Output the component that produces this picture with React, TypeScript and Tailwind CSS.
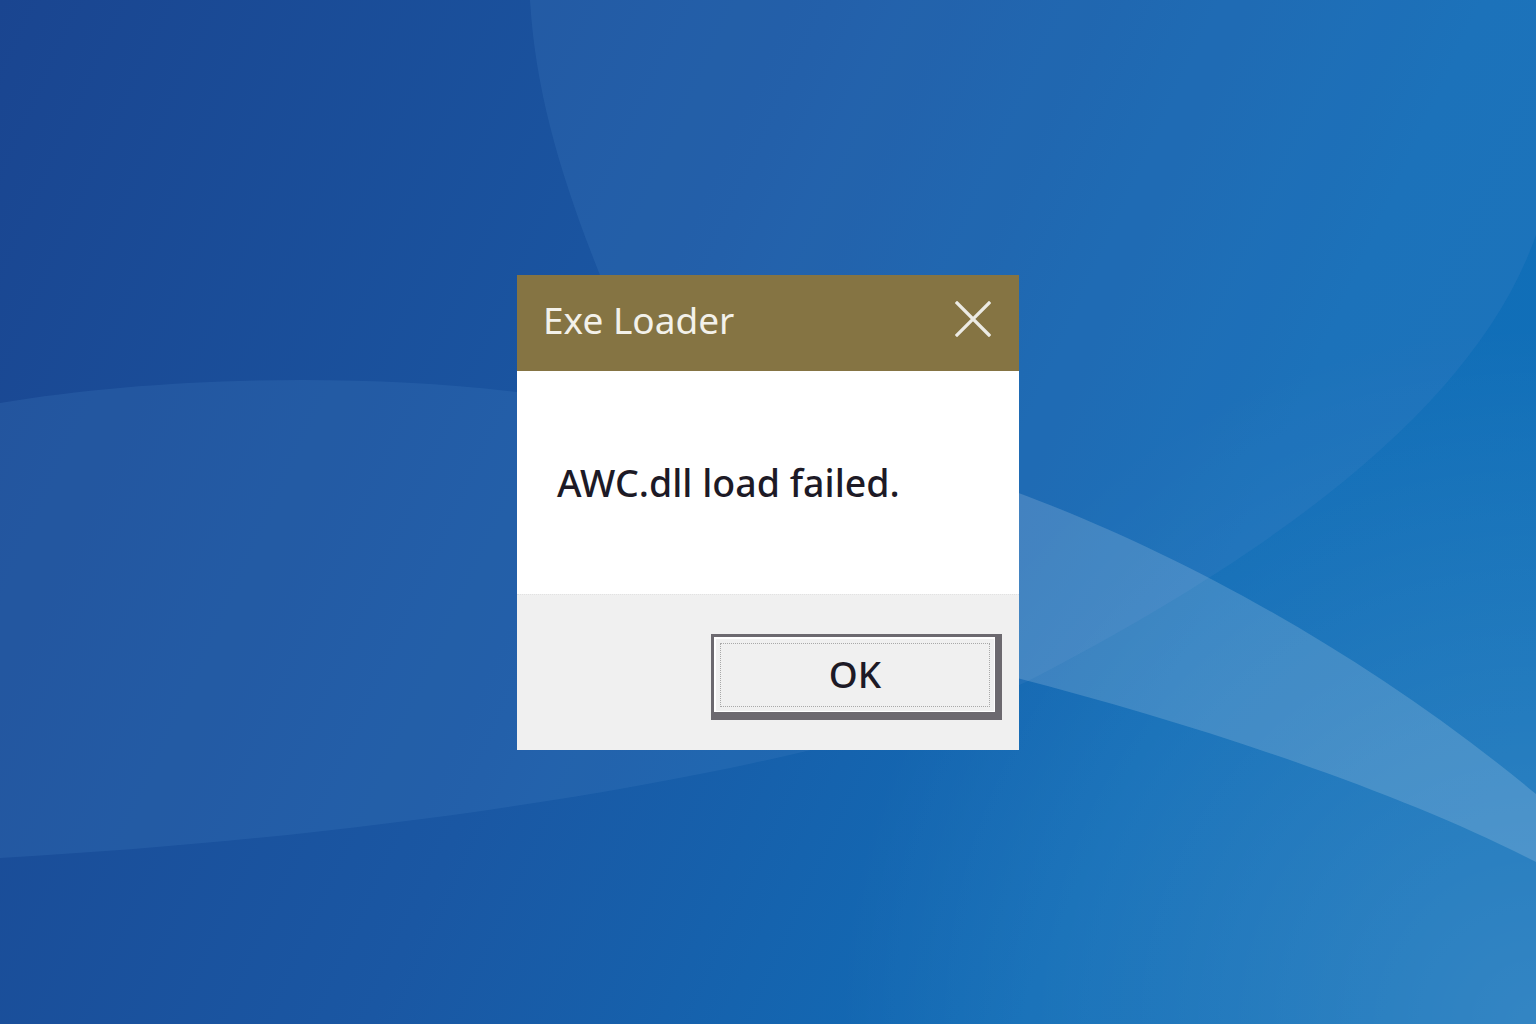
import React from "react";

function Wallpaper() {
  return (
    <svg
      className="absolute inset-0 h-full w-full"
      viewBox="0 0 1536 1024"
      preserveAspectRatio="none"
    >
      <defs>
        <linearGradient id="base" x1="0" y1="0" x2="1536" y2="700" gradientUnits="userSpaceOnUse">
          <stop offset="0" stopColor="#1a4590" />
          <stop offset="0.45" stopColor="#1a57a3" />
          <stop offset="0.8" stopColor="#116db7" />
          <stop offset="1" stopColor="#1070b9" />
        </linearGradient>
        <radialGradient id="glow" cx="1536" cy="1024" r="700" gradientUnits="userSpaceOnUse">
          <stop offset="0" stopColor="#ffffff" stopOpacity="0.15" />
          <stop offset="1" stopColor="#ffffff" stopOpacity="0" />
        </radialGradient>
      </defs>
      <rect width="1536" height="1024" fill="url(#base)" />
      <rect width="1536" height="1024" fill="url(#glow)" />
      {/* big soft shape, top right and left band */}
      <path
        d="M530 0 L1536 0 L1536 235 C1480 395 1300 540 1030 680 C900 745 500 830 0 858 L0 403 C150 378 350 372 517 392 L610 300 C565 190 536 100 530 0 Z"
        fill="#4a86c6"
        fillOpacity="0.2"
      />
      {/* ribbon running down to the right */}
      <path
        d="M1005 488 C1150 540 1350 640 1536 794 L1536 862 C1400 792 1200 725 1005 675 Z"
        fill="#ffffff"
        fillOpacity="0.16"
      />
    </svg>
  );
}

export default function App() {
  return (
    <div
      className="relative flex h-[1024px] w-full items-center justify-center overflow-hidden"
      style={{ fontFamily: '"Noto Sans", "Open Sans", sans-serif' }}
    >
      <Wallpaper />

      {/* Dialog */}
      <div className="relative flex w-[502px] flex-col">
        {/* Title bar */}
        <div className="flex h-[96px] items-center justify-between bg-[#857443] pl-[26px] pr-[28px]">
          <span className="pb-[6px] text-[37px] leading-none text-[#f3f1ea]">Exe Loader</span>
          <svg width="36" height="36" viewBox="0 0 36 36" className="mb-[8px]">
            <path d="M2 2 L34 34 M34 2 L2 34" stroke="#ecebe4" strokeWidth="3.2" strokeLinecap="square" />
          </svg>
        </div>

        {/* Message */}
        <div className="flex h-[223px] items-center bg-white pl-[40px]">
          <span className="pt-[2px] text-[37.5px] font-medium leading-none text-[#1d1a26]">
            AWC.dll load failed.
          </span>
        </div>

        {/* Footer */}
        <div className="flex h-[156px] items-start justify-end border-t border-dotted border-[#e2e2e2] bg-[#f0f0f0] pr-[17px] pt-[39px]">
          <button className="h-[86px] w-[291px] border-[#6c696f] border-t-[3px] border-l-[3px] border-r-[7px] border-b-[8px] bg-[#f0f0f0] p-0">
            <div className="h-full w-full border-t-2 border-l-2 border-r border-b border-white p-[4px]">
              <div className="flex h-full w-full items-center justify-center border border-dotted border-[#a9a9a9]">
                <span className="pb-[2px] text-[37px] font-medium leading-none text-[#1d1a26]">OK</span>
              </div>
            </div>
          </button>
        </div>
      </div>
    </div>
  );
}
